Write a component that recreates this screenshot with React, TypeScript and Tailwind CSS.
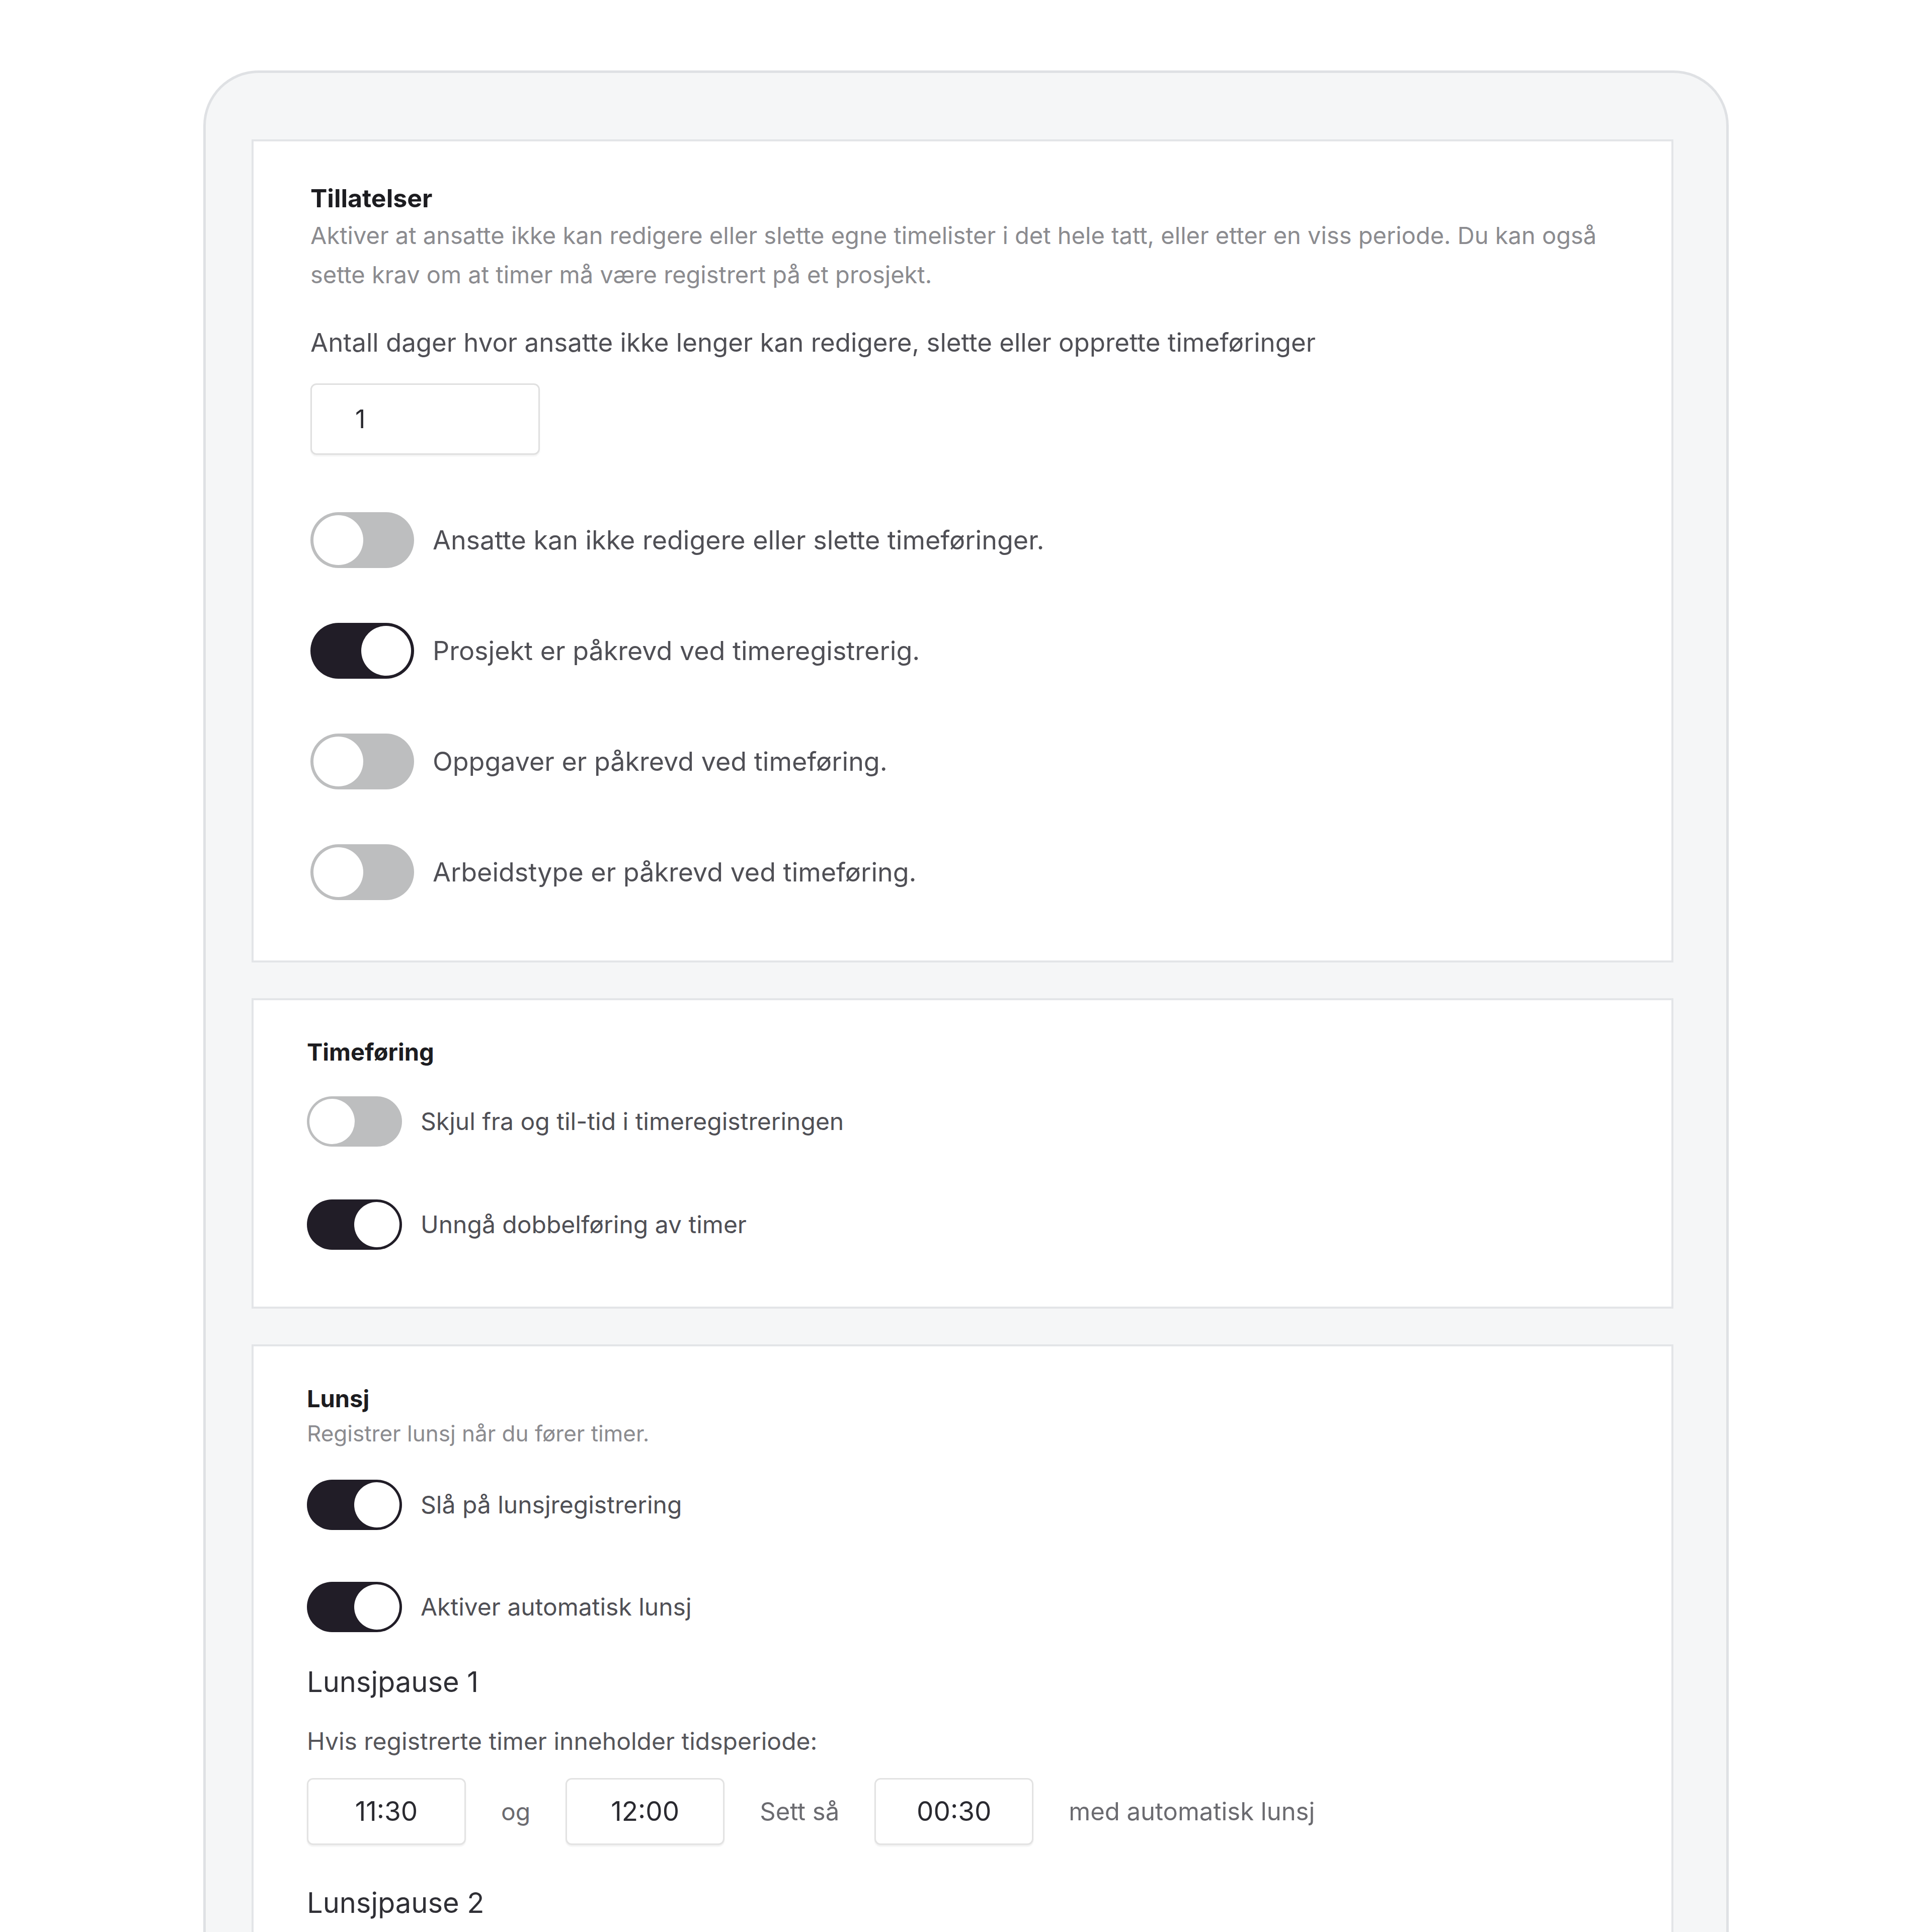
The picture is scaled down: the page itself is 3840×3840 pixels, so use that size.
import React from "react";

const font = { fontFamily: "Inter, 'Noto Sans', sans-serif" };

function Toggle({ on, big }: { on: boolean; big?: boolean }) {
  const size = big ? "w-[206px] h-[111px] p-[6px]" : "w-[189px] h-[100px] p-[5px]";
  const color = on ? "bg-[#211d27] justify-end" : "bg-[#bdbebf] justify-start";
  return (
    <div className={`${size} ${color} flex shrink-0 rounded-full`}>
      <div className="h-full aspect-square rounded-full bg-white" />
    </div>
  );
}

function ToggleRow({ on, big, label }: { on: boolean; big?: boolean; label: string }) {
  return (
    <div className="flex items-center gap-[37px]">
      <Toggle on={on} big={big} />
      <span
        className={
          big
            ? "text-[52px] leading-[62px] text-[#4f4f55]"
            : "text-[48px] leading-[58px] text-[#4f4f55]"
        }
      >
        {label}
      </span>
    </div>
  );
}

function TimeBox({ value }: { value: string }) {
  return (
    <div className="w-[316px] h-[133px] shrink-0 rounded-[12px] border-[3px] border-[#e3e3e3] bg-white flex items-center justify-center shadow-[0_3px_3px_rgba(0,0,0,0.06)]">
      <span className="text-[53px] text-[#2a2a30]">{value}</span>
    </div>
  );
}

export default function App() {
  return (
    <div className="w-[3840px] h-[3840px] overflow-hidden bg-white" style={font}>
      <div className="ml-[404px] mt-[140px] w-[3032px] rounded-t-[110px] border-[5px] border-b-0 border-[#dfe1e4] bg-[#f5f6f7] pl-[91px] pr-[105px] pt-[132px] pb-[400px] flex flex-col gap-[71px]">
        {/* Card 1 */}
        <div className="bg-white border-4 border-[#e3e5e8] pl-[113px] pr-[60px] pt-[83px] pb-[120px] flex flex-col">
          <div className="text-[50px] leading-[60px] font-bold text-[#1c1c20]">Tillatelser</div>
          <div className="mt-[5px] text-[47px] leading-[78px] text-[#8b8b8f] max-w-[2600px]">
            Aktiver at ansatte ikke kan redigere eller slette egne timelister i det hele tatt, eller etter en viss periode. Du kan også sette krav om at timer må være registrert på et prosjekt.
          </div>
          <div className="mt-[63px] text-[51px] leading-[66px] text-[#4f4f55]">
            Antall dager hvor ansatte ikke lenger kan redigere, slette eller opprette timeføringer
          </div>
          <div className="mt-[48px] w-[456px] h-[142px] rounded-[12px] border-[3px] border-[#e0e0e0] bg-white flex items-center pl-[86px] shadow-[0_3px_3px_rgba(0,0,0,0.05)]">
            <span className="text-[50px] text-[#2a2a30]">1</span>
          </div>
          <div className="mt-[114px] flex flex-col gap-[109px]">
            <ToggleRow big on={false} label="Ansatte kan ikke redigere eller slette timeføringer." />
            <ToggleRow big on={true} label="Prosjekt er påkrevd ved timeregistrerig." />
            <ToggleRow big on={false} label="Oppgaver er påkrevd ved timeføring." />
            <ToggleRow big on={false} label="Arbeidstype er påkrevd ved timeføring." />
          </div>
        </div>

        {/* Card 2 */}
        <div className="bg-white border-4 border-[#e3e5e8] pl-[106px] pr-[60px] pt-[75px] pb-[113px] flex flex-col">
          <div className="text-[47px] leading-[56px] font-bold text-[#1c1c20]">Timeføring</div>
          <div className="mt-[60px] flex flex-col gap-[105px]">
            <ToggleRow on={false} label="Skjul fra og til-tid i timeregistreringen" />
            <ToggleRow on={true} label="Unngå dobbelføring av timer" />
          </div>
        </div>

        {/* Card 3 */}
        <div className="bg-white border-4 border-[#e3e5e8] pl-[106px] pr-[60px] pt-[76px] pb-[200px] flex flex-col">
          <div className="text-[47px] leading-[56px] font-bold text-[#1c1c20]">Lunsj</div>
          <div className="mt-[16px] text-[44px] leading-[50px] text-[#8b8b8f]">
            Registrer lunsj når du fører timer.
          </div>
          <div className="mt-[67px] flex flex-col gap-[103px]">
            <ToggleRow on={true} label="Slå på lunsjregistrering" />
            <ToggleRow on={true} label="Aktiver automatisk lunsj" />
          </div>
          <div className="mt-[65px] text-[56px] leading-[68px] text-[#2f2f35]">Lunsjpause 1</div>
          <div className="mt-[56px] text-[48px] leading-[56px] text-[#55555a]">
            Hvis registrerte timer inneholder tidsperiode:
          </div>
          <div className="mt-[45px] flex items-center gap-[70px]">
            <TimeBox value="11:30" />
            <span className="text-[48px] text-[#6b6b70]">og</span>
            <TimeBox value="12:00" />
            <span className="text-[49px] text-[#6b6b70]">Sett så</span>
            <TimeBox value="00:30" />
            <span className="text-[49px] text-[#6b6b70]">med automatisk lunsj</span>
          </div>
          <div className="mt-[81px] text-[56px] leading-[68px] text-[#2f2f35]">Lunsjpause 2</div>
        </div>
      </div>
    </div>
  );
}
